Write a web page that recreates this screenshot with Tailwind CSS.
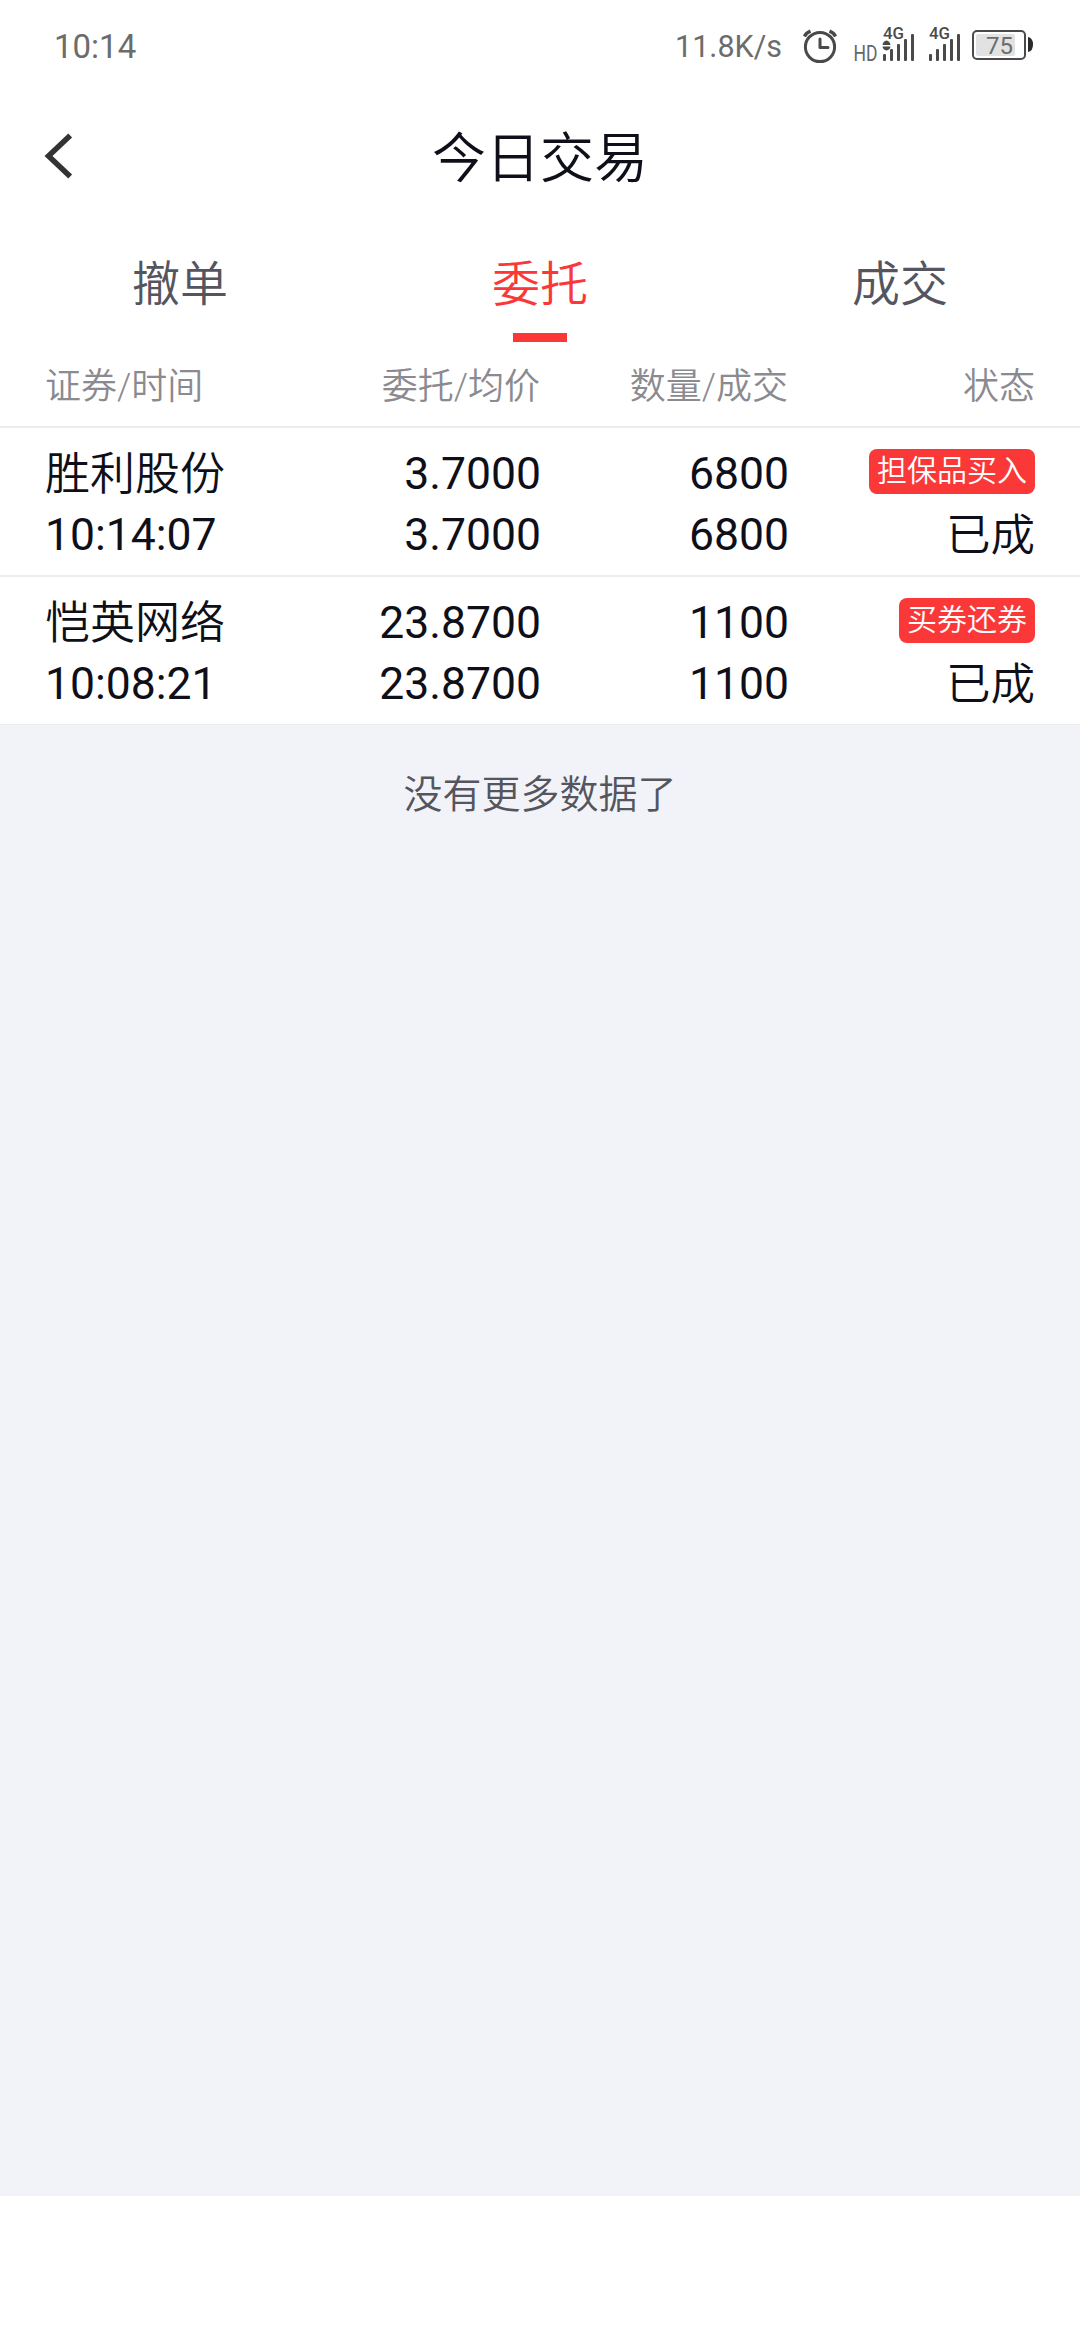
<!DOCTYPE html>
<html lang="zh-CN">
<head>
    <meta charset="UTF-8">
    <meta name="viewport" content="width=device-width, initial-scale=1.0">
    <title>今日交易</title>
    <script src="https://cdn.jsdelivr.net/npm/@tailwindcss/browser@4"></script>
</head>
<body class="bg-white font-['Roboto','Noto_Sans_CJK_SC',sans-serif] text-[#0f0f19]">
    <div class="w-[1080px] h-[2340px] flex flex-col overflow-hidden">
        <!-- Status bar -->
        <div class="h-[92px] shrink-0 flex items-center justify-between pl-[54px] pr-[47px] text-[#6c6c6c]">
            <span class="text-[33px] pt-[2px]">10:14</span>
            <div class="flex items-center">
                <span class="text-[30.5px] pt-[2px] mr-[20px]">11.8K/s</span>
                <svg class="w-[36px] h-[36px] mr-[16px]" viewBox="0 0 36 36" fill="none" stroke="#4a4a4a" stroke-width="3">
                    <circle cx="18" cy="19" r="14.6"/>
                    <path d="M18 11v8.5h8" stroke-linecap="round" stroke-linejoin="round"/>
                    <path d="M2.5 8.5Q4 5 8.5 3.2M33.5 8.5Q32 5 27.5 3.2" stroke-width="3.4"/>
                </svg>
                <!-- SIM 1 / SIM 2 signal -->
                <svg class="w-[106px] h-[60px] mr-[11px]" viewBox="853 16 106 60" fill="#4a4a4a">
                    <text x="852.5" y="61" font-size="22" textLength="24" lengthAdjust="spacingAndGlyphs" fill="#666">HD</text>
                    <text x="882" y="39" font-size="16.5" font-weight="500" textLength="21" lengthAdjust="spacingAndGlyphs">4G</text>
                    <path d="M881.5 45Q882 41 885.5 40.5Q889 41 889.5 45zM881.5 46.5h8Q889 50 885.5 50.5Q882 50 881.5 46.5z"/>
                    <rect x="882" y="54" width="3" height="7" rx="1"/>
                    <rect x="889" y="49" width="3" height="12" rx="1"/>
                    <rect x="896" y="44" width="3" height="17" rx="1"/>
                    <rect x="903" y="39" width="3" height="22" rx="1"/>
                    <rect x="910" y="34" width="3" height="27" rx="1"/>
                    <text x="928" y="39" font-size="16.5" font-weight="500" textLength="21" lengthAdjust="spacingAndGlyphs">4G</text>
                    <rect x="928" y="54" width="3" height="7" rx="1"/>
                    <rect x="935" y="49" width="3" height="12" rx="1"/>
                    <rect x="942" y="44" width="3" height="17" rx="1"/>
                    <rect x="949" y="39" width="3" height="22" rx="1"/>
                    <rect x="956" y="34" width="3" height="27" rx="1"/>
                </svg>
                <svg class="w-[62px] h-[32px]" viewBox="970 30 62 32">
                    <rect x="972" y="31" width="52" height="28" rx="4" fill="none" stroke="#4a4a4a" stroke-width="2"/>
                    <rect x="975" y="34" width="39" height="22" rx="2" fill="#e2e2e2"/>
                    <path d="M1027 37q5 1 5 7.5t-5 7.5z" fill="#2b2b2b"/>
                    <text x="985" y="54" font-size="24" fill="#6c6c6c">75</text>
                </svg>
            </div>
        </div>

        <!-- Title bar -->
        <div class="h-[128px] shrink-0 relative flex items-center justify-center">
            <svg class="absolute left-[44px] top-[40px] w-[30px] h-[48px]" viewBox="0 0 30 48" fill="none" stroke="#333333" stroke-width="5.5">
                <path d="M26.2 3.5L4.5 24L26.2 44.5"/>
            </svg>
            <h1 class="text-[54px] leading-[128px] font-[350] pt-[7px]">今日交易</h1>
        </div>

        <!-- Tabs -->
        <div class="h-[122px] shrink-0 grid grid-cols-3 text-center text-[48px] font-[350] text-[#55555f]">
            <div class="leading-[130px]">撤单</div>
            <div class="flex flex-col items-center text-[#fa3838]">
                <span class="h-[113px] leading-[130px]">委托</span>
                <span class="w-[54px] h-[9px] bg-[#fb3838]"></span>
            </div>
            <div class="leading-[130px]">成交</div>
        </div>

        <!-- Column headings -->
        <div class="h-[86px] shrink-0 border-b-2 border-[#ededed] grid grid-cols-[248px_247px_248px_247px] pl-[45px] text-right text-[36px] leading-[90px] font-[350] text-[#8a8a90]">
            <span class="text-left">证券/时间</span>
            <span>委托/均价</span>
            <span>数量/成交</span>
            <span>状态</span>
        </div>

        <!-- Orders -->
        <div class="h-[149px] shrink-0 border-b-2 border-[#ededed] grid grid-cols-[248px_248px_248px_246px] pl-[45px] pt-[16px] text-right text-[44.5px] leading-[61px]">
            <div class="text-left">
                <p class="h-[61px] leading-[62px] text-[45px] font-[350]">胜利股份</p>
                <p>10:14:07</p>
            </div>
            <div>
                <p>3.7000</p>
                <p>3.7000</p>
            </div>
            <div>
                <p>6800</p>
                <p>6800</p>
            </div>
            <div class="flex flex-col items-end">
                <div class="h-[61px] pt-[5px]">
                    <p class="h-[45px] px-2 rounded-lg bg-[#fb3838] text-white text-[30px] leading-[44px] font-[350]">担保品买入</p>
                </div>
                <p class="leading-[62px] font-[350]">已成</p>
            </div>
        </div>
        <div class="h-[147px] shrink-0 grid grid-cols-[248px_248px_248px_246px] pl-[45px] pt-[16px] text-right text-[44.5px] leading-[61px]">
            <div class="text-left">
                <p class="h-[61px] leading-[62px] text-[45px] font-[350]">恺英网络</p>
                <p>10:08:21</p>
            </div>
            <div>
                <p>23.8700</p>
                <p>23.8700</p>
            </div>
            <div>
                <p>1100</p>
                <p>1100</p>
            </div>
            <div class="flex flex-col items-end">
                <div class="h-[61px] pt-[5px]">
                    <p class="h-[45px] px-2 rounded-lg bg-[#fb3838] text-white text-[30px] leading-[44px] font-[350]">买券还券</p>
                </div>
                <p class="leading-[62px] font-[350]">已成</p>
            </div>
        </div>

        <!-- End of list -->
        <div class="h-[1472px] shrink-0 bg-[#f2f3f8] border-t border-[#ededf0] pt-[40px] text-center text-[39px] leading-[60px] font-[350] text-[#55555d]">没有更多数据了</div>
    </div>
</body>
</html>
